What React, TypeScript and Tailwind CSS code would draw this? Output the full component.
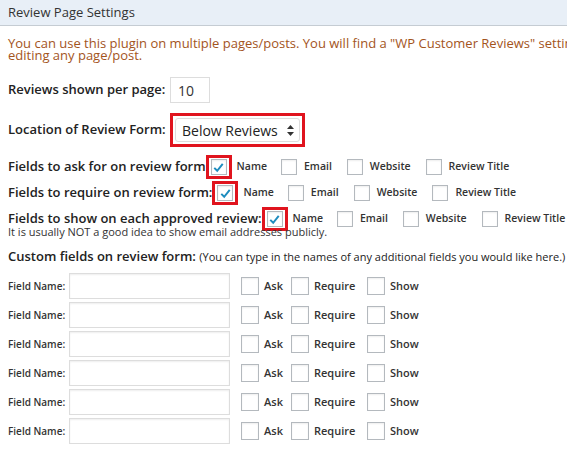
import React from 'react';

const font = { fontFamily: '"Open Sans", "Liberation Sans", sans-serif' };

const Check = ({ checked = false, size = 'sm' }: { checked?: boolean; size?: 'sm' | 'lg' }) => (
  <span
    className={`inline-flex shrink-0 items-center justify-center bg-white border border-[#b4b9be] shadow-[inset_0_1px_2px_rgba(0,0,0,0.07)] ${
      size === 'lg' ? 'w-[18px] h-[18px]' : 'w-[16px] h-[16px]'
    }`}
  >
    {checked && (
      <svg width="13" height="13" viewBox="0 0 20 20">
        <path d="M3.5 10.5 L8 15 L16.5 4.5" fill="none" stroke="#1e8cbe" strokeWidth="3" />
      </svg>
    )}
  </span>
);

// red highlight around the first checkbox of each row
const Marked = () => (
  <span className="inline-flex shrink-0 items-center justify-center w-[26px] h-[24px] border-[3px] border-[#e0141e]">
    <Check checked />
  </span>
);

const Opt = ({ label }: { label: string }) => (
  <span className="flex items-center gap-[7px] text-[10.5px] font-semibold text-[#333]">
    <Check />
    {label}
  </span>
);

const FieldsRow = ({ title }: { title: string }) => (
  <div className="flex items-center h-[26px] whitespace-nowrap">
    <span className="text-[13px] font-semibold text-[#222]">{title}</span>
    <span className="flex items-center gap-[5px]">
      <Marked />
      <span className="text-[10.5px] font-semibold text-[#333] mr-[14px]">Name</span>
    </span>
    <span className="flex items-center gap-[15px]">
      <Opt label="Email" />
      <Opt label="Website" />
      <Opt label="Review Title" />
    </span>
  </div>
);

const CustomRow = () => (
  <div className="flex items-center h-[26px] whitespace-nowrap">
    <span className="w-[61px] text-[10px] font-semibold text-[#333]">Field Name:</span>
    <span className="w-[161px] h-[26px] bg-white border border-[#ddd] shadow-[inset_0_1px_2px_rgba(0,0,0,0.07)]" />
    <span className="flex items-center ml-[11px]">
      <Check size="lg" />
      <span className="ml-[5px] w-[27px] text-[11px] font-semibold text-[#333]">Ask</span>
      <Check size="lg" />
      <span className="ml-[5px] w-[53px] text-[11px] font-semibold text-[#333]">Require</span>
      <Check size="lg" />
      <span className="ml-[5px] text-[11px] font-semibold text-[#333]">Show</span>
    </span>
  </div>
);

export default function App() {
  return (
    <div className="w-[567px] h-[450px] overflow-hidden bg-white" style={font}>
      {/* Header */}
      <div className="h-[26px] flex items-center px-[8px] bg-[#e8eff7] border-b border-[#c5ccd3] text-[13px] text-[#333]">
        Review Page Settings
      </div>

      <div className="pl-[8px]">
        <p className="mt-[11px] text-[13px] leading-[12px] text-[#a3541c] whitespace-nowrap">
          You can use this plugin on multiple pages/posts. You will find a "WP Customer Reviews" settings box when
          <br />
          editing any page/post.
        </p>

        {/* Reviews per page */}
        <div className="flex items-center mt-[16px] h-[26px]">
          <span className="w-[162px] text-[13px] font-semibold text-[#222]">Reviews shown per page:</span>
          <span className="flex items-center w-[40px] h-[26px] border border-[#ddd] pl-[7px] text-[14px] text-[#333]">10</span>
        </div>

        {/* Location */}
        <div className="flex items-center mt-[10px] h-[34px]">
          <span className="w-[162px] text-[13px] font-semibold text-[#222]">Location of Review Form:</span>
          <span className="flex items-center w-[135px] h-[34px] border-[3px] border-[#e0141e] p-[2px]">
            <span className="flex items-center justify-between w-full h-full border border-[#ddd] rounded-[3px] pl-[6px] pr-[5px] text-[14px] text-[#222]">
              Below Reviews
              <svg width="7" height="11" viewBox="0 0 7 11">
                <path d="M3.5 0 L7 4 L0 4 Z M0 7 L7 7 L3.5 11 Z" fill="#333" />
              </svg>
            </span>
          </span>
        </div>

        <div className="mt-[7px] flex flex-col">
          <FieldsRow title="Fields to ask for on review form" />
          <FieldsRow title="Fields to require on review form:" />
          <FieldsRow title="Fields to show on each approved review:" />
        </div>
        <div className="text-[11px] leading-[12px] text-[#333] -mt-[6px]">
          It is usually NOT a good idea to show email addresses publicly.
        </div>

        <div className="mt-[9px] text-[13px] leading-[18px] text-[#222] whitespace-nowrap">
          <span className="font-semibold">Custom fields on review form: </span>
          <span className="text-[11px]">(You can type in the names of any additional fields you would like here.)</span>
        </div>

        <div className="mt-[7px] flex flex-col gap-[3px]">
          {[0, 1, 2, 3, 4, 5].map((i) => (
            <CustomRow key={i} />
          ))}
        </div>
      </div>
    </div>
  );
}
